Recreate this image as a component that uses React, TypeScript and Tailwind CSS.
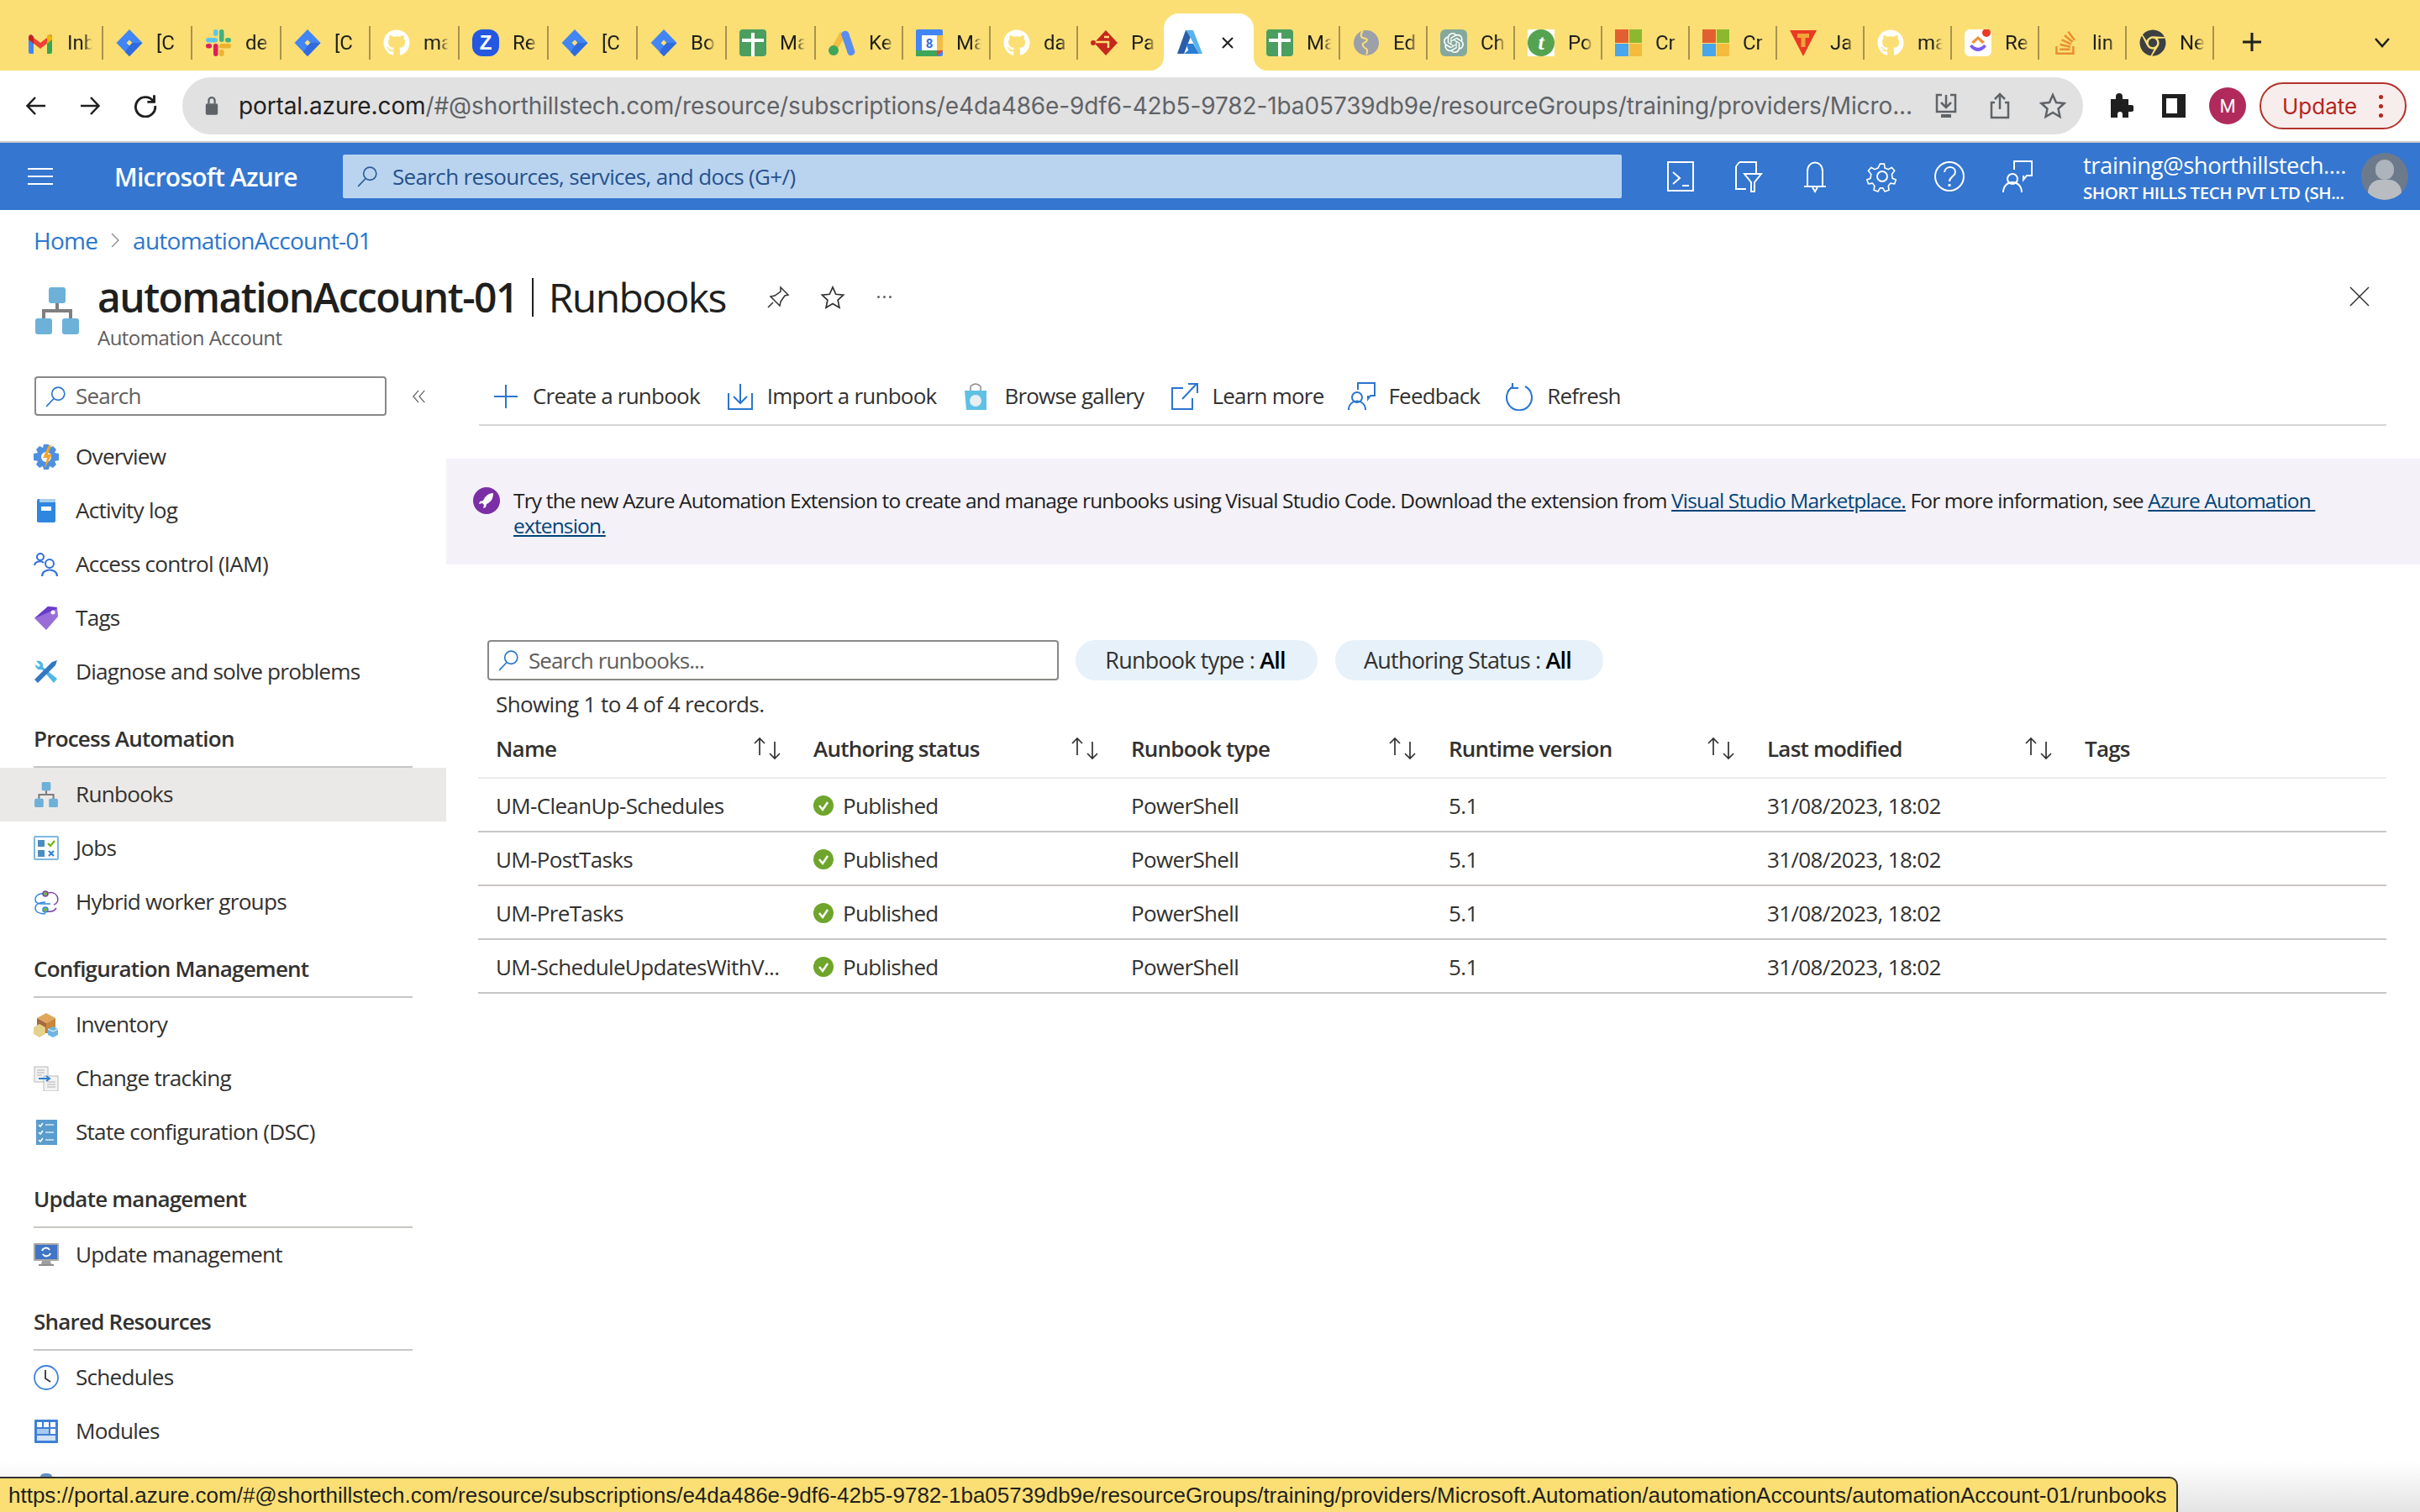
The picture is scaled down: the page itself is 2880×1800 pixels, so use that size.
import React from 'react';
import { FaGithub, FaChrome, FaStackOverflow } from 'react-icons/fa';
import { SiOpenai } from 'react-icons/si';

const SEGOE = "font-['Open_Sans',sans-serif]";

// ---------- Browser tab favicons ----------
const Gmail = () => (
  <svg viewBox="0 0 32 32" className="w-8 h-8">
    <path d="M2 10a3 3 0 0 1 6-1v20H4a2 2 0 0 1-2-2z" fill="#4285f4" />
    <path d="M30 10a3 3 0 0 0-6-1v20h4a2 2 0 0 0 2-2z" fill="#34a853" />
    <path d="M3 6l13 10L29 6l1 6-14 11L2 12z" fill="#ea4335" />
    <path d="M24 9l3-3 3 3v3l-6 5z" fill="#f5b800" />
    <path d="M2 9l3-3 3 3v8l-6-5z" fill="#c5221f" />
  </svg>
);
const Jira = () => (
  <svg viewBox="0 0 32 32" className="w-8 h-8">
    <path fillRule="evenodd" d="M16 0l15.5 16L16 32 .5 16zm0 12.5L12.5 16l3.500 3.500 3.500-3.500z" fill="#4285f4" />
    <path d="M16 19.500l3.500-3.500 12 0L16 32l-5-5z" fill="#2f6bdc" />
  </svg>
);
const Slack = () => (
  <svg viewBox="0 0 32 32" className="w-8 h-8">
    <rect x="1" y="10" width="14" height="5.500" rx="2.750" fill="#5cc6e8" />
    <rect x="10" y="0" width="5.500" height="8" rx="2.750" fill="#5cc6e8" />
    <rect x="17" y="0" width="5.500" height="15" rx="2.750" fill="#3fb27f" />
    <rect x="24" y="10" width="7" height="5.500" rx="2.750" fill="#3fb27f" />
    <rect x="17" y="17" width="14" height="5.500" rx="2.750" fill="#ecb22e" />
    <rect x="17" y="24" width="5.500" height="8" rx="2.750" fill="#ecb22e" />
    <rect x="10" y="17" width="5.500" height="15" rx="2.750" fill="#e01e5a" />
    <rect x="1" y="17" width="7" height="5.500" rx="2.750" fill="#e01e5a" />
  </svg>
);
const GitHub = () => <FaGithub className="w-8 h-8 text-white" />;
const ZoomZ = () => (
  <div className="w-8 h-8 rounded-[12px] bg-[#2558e0] flex items-center justify-center text-white font-bold text-[24px] leading-none font-['Liberation_Sans',sans-serif]">Z</div>
);
const Sheet = () => (
  <div className="w-8 h-8 rounded-[4px] bg-[#4a9e60] relative">
    <div className="absolute left-[14px] top-[4px] w-[4px] h-[28px] bg-white" />
    <div className="absolute left-[3px] top-[11px] w-[26px] h-[4px] bg-white" />
  </div>
);
const Ads = () => (
  <svg viewBox="0 0 32 32" className="w-8 h-8">
    <path d="M14 3L2 24l6 4L20 8z" fill="#f2bd42" />
    <circle cx="6" cy="25" r="6" fill="#3fa55b" />
    <path d="M15 6a5 5 0 0 1 9-2l7 21a4.500 4.500 0 0 1-8 4z" fill="#5a8df0" />
  </svg>
);
const Calendar = () => (
  <svg viewBox="0 0 32 32" className="w-8 h-8">
    <rect width="32" height="32" rx="2" fill="#4285f4" />
    <rect x="7" y="7" width="18" height="18" fill="#fff" />
    <rect x="25" y="7" width="7" height="18" fill="#f2bd42" />
    <rect y="25" width="25" height="7" fill="#3fa55b" />
    <rect y="7" width="7" height="18" fill="#4285f4" />
    <path d="M25 25h7l-7 7z" fill="#ea4335" />
    <text x="16" y="22" textAnchor="middle" fontSize="15" fontWeight="700" fill="#2f6fd4" fontFamily="Roboto, sans-serif">8</text>
  </svg>
);
const RedDiamond = () => (
  <svg viewBox="0 0 32 32" className="w-8 h-8">
    <path d="M18 1l14 15-14 15-12-13v-4z" fill="#c6281c" />
    <circle cx="3" cy="16" r="3" fill="#c6281c" />
    <path d="M6 15h15v7" stroke="#fbdf74" strokeWidth="2.500" fill="none" />
    <path d="M16 9h6" stroke="#fbdf74" strokeWidth="2.500" fill="none" />
  </svg>
);
const AzureA = () => (
  <svg viewBox="0 0 32 32" className="w-8 h-8">
    <path d="M11 2h9L9 30H1z" fill="#2a5ea8" />
    <path d="M20 2h-9l3 4 13 24h4z" fill="#57b3ec" />
    <path d="M12 18l8 0 7 12H9l5-4z" fill="#2b7cd3" />
  </svg>
);
const Globe = () => (
  <svg viewBox="0 0 32 32" className="w-8 h-8">
    <circle cx="16" cy="16" r="15" fill="#9ca0a8" />
    <path d="M12 2c-4 4-3 8 3 9 4 1 1 4-2 5-3 2 0 6 3 7 2 2 1 5 0 7" stroke="#fbdf74" strokeWidth="2" fill="none" />
  </svg>
);
const ChatGpt = () => (
  <div className="w-8 h-8 rounded-[6px] bg-[#84a99c] flex items-center justify-center">
    <SiOpenai className="w-6 h-6 text-white" />
  </div>
);
const GreenT = () => (
  <div className="w-8 h-8 bg-white flex items-center justify-center">
    <div className="w-8 h-8 rounded-full bg-[#55a350] text-white text-[26px] leading-none italic font-bold flex items-center justify-center font-['Liberation_Serif',serif]">t</div>
  </div>
);
const MsLogo = () => (
  <div className="w-8 h-8 grid grid-cols-2 grid-rows-2 gap-[1px]">
    <div className="bg-[#e2602f]" />
    <div className="bg-[#8cb82f]" />
    <div className="bg-[#49a5ec]" />
    <div className="bg-[#f5bb3c]" />
  </div>
);
const RedT = () => (
  <svg viewBox="0 0 32 32" className="w-8 h-8">
    <path d="M0 1h32L16 32z" fill="#ea3a24" />
    <path d="M9 5h14v5h-4.500v11h-5V10H9z" fill="#f2a33a" />
  </svg>
);
const ClickUp = () => (
  <svg viewBox="0 0 32 32" className="w-8 h-8">
    <rect width="32" height="32" rx="6" fill="#fff" />
    <path d="M8 15l8-7 8 7-3 2-5-5-5 5z" fill="#f0913c" />
    <path d="M6 20l3-2c4 5 10 5 14 0l3 2c-6 8-14 8-20 0z" fill="#7a5cf0" />
    <circle cx="26" cy="4" r="5" fill="#ea3a24" />
  </svg>
);
const StackOv = () => <FaStackOverflow className="w-8 h-8 text-[#e8902f]" />;
const ChromeG = () => <FaChrome className="w-8 h-8 text-[#3c4043]" />;

type TabDef = { icon: React.ReactNode; label: string; w: string };
const tabsLeft: TabDef[] = [
  { icon: <Gmail />, label: 'Inb', w: 'w-[106px]' },
  { icon: <Jira />, label: '[C', w: 'w-[106px]' },
  { icon: <Slack />, label: 'de', w: 'w-[106px]' },
  { icon: <Jira />, label: '[C', w: 'w-[106px]' },
  { icon: <GitHub />, label: 'ma', w: 'w-[106px]' },
  { icon: <ZoomZ />, label: 'Re', w: 'w-[106px]' },
  { icon: <Jira />, label: '[C', w: 'w-[106px]' },
  { icon: <Jira />, label: 'Bo', w: 'w-[106px]' },
  { icon: <Sheet />, label: 'Ma', w: 'w-[106px]' },
  { icon: <Ads />, label: 'Ke', w: 'w-[104px]' },
  { icon: <Calendar />, label: 'Ma', w: 'w-[104px]' },
  { icon: <GitHub />, label: 'da', w: 'w-[104px]' },
];
const tabsRight: TabDef[] = [
  { icon: <Sheet />, label: 'Ma', w: 'w-[103px]' },
  { icon: <Globe />, label: 'Ed', w: 'w-[104px]' },
  { icon: <ChatGpt />, label: 'Ch', w: 'w-[104px]' },
  { icon: <GreenT />, label: 'Po', w: 'w-[104px]' },
  { icon: <MsLogo />, label: 'Cr', w: 'w-[104px]' },
  { icon: <MsLogo />, label: 'Cr', w: 'w-[104px]' },
  { icon: <RedT />, label: 'Ja', w: 'w-[104px]' },
  { icon: <GitHub />, label: 'ma', w: 'w-[104px]' },
  { icon: <ClickUp />, label: 'Re', w: 'w-[104px]' },
  { icon: <StackOv />, label: 'lin', w: 'w-[104px]' },
  { icon: <ChromeG />, label: 'Ne', w: 'w-[104px]' },
];

function Tab({ icon, label, w, sep = true }: TabDef & { sep?: boolean }) {
  return (
    <div className={`${w} h-[40px] shrink-0 flex items-center pl-[15px] ${sep ? 'border-r-2 border-[#a8924f]' : ''}`}>
      <div className="w-8 h-8 shrink-0 flex items-center justify-center">{icon}</div>
      <span className="ml-[16px] w-[30px] overflow-hidden whitespace-nowrap text-[24px] text-[#1f1f1f] font-['Roboto',sans-serif] [mask-image:linear-gradient(to_right,black_65%,transparent)]">{label}</span>
    </div>
  );
}

function TabBar() {
  return (
    <div className="h-[84px] bg-[#fbdf74] flex items-start pl-[17px]">
      <div className="flex mt-[31px]">
        {tabsLeft.map((t, i) => <Tab key={i} {...t} />)}
        <Tab icon={<RedDiamond />} label="Pa" w="w-[102px]" sep={false} />
      </div>
      {/* active tab */}
      <div className="relative mt-[16px] w-[107px] h-[68px] bg-white rounded-t-[18px] flex items-center pl-[15px] shrink-0">
        <div className="absolute -left-[16px] bottom-0 w-[16px] h-[16px] bg-white"><div className="w-full h-full bg-[#fbdf74] rounded-br-[16px]" /></div>
        <div className="absolute -right-[16px] bottom-0 w-[16px] h-[16px] bg-white"><div className="w-full h-full bg-[#fbdf74] rounded-bl-[16px]" /></div>
        <AzureA />
        <svg viewBox="0 0 16 16" className="w-4 h-4 ml-[21px] mt-[2px]"><path d="M2 2l12 12M14 2L2 14" stroke="#1f1f1f" strokeWidth="2" /></svg>
      </div>
      <div className="flex mt-[31px]">
        {tabsRight.map((t, i) => <Tab key={i} {...t} />)}
      </div>
      <svg viewBox="0 0 24 24" className="w-6 h-6 ml-[33px] mt-[38px]"><path d="M12 1v22M1 12h22" stroke="#1f1f1f" strokeWidth="3" /></svg>
      <svg viewBox="0 0 24 24" className="w-6 h-6 ml-[131px] mt-[38px]"><path d="M4 8l8 9 8-9" stroke="#1f1f1f" strokeWidth="2.500" fill="none" /></svg>
    </div>
  );
}

// ---------- Browser toolbar ----------
function BrowserToolbar() {
  return (
    <div className="h-[86px] border-b-2 border-[#c9c9c9] bg-white flex items-center relative">
      <div className="w-[217px] flex items-center pl-[31px] gap-[40px] shrink-0">
        <svg viewBox="0 0 24 24" className="w-[24px] h-[24px]"><path d="M23 12H2M11 2L1.500 12 11 22" stroke="#1f1f1f" strokeWidth="2.500" fill="none" /></svg>
        <svg viewBox="0 0 24 24" className="w-[24px] h-[24px]"><path d="M1 12h21M13 2l9.500 10L13 22" stroke="#1f1f1f" strokeWidth="2.500" fill="none" /></svg>
        <svg viewBox="0 0 24 24" className="w-[28px] h-[28px]"><path d="M20 7a10 10 0 1 0 2 5M21 1v7h-7" stroke="#1f1f1f" strokeWidth="2.500" fill="none" /></svg>
      </div>
      <div className="w-[2262px] h-[68px] bg-[#e1e1e1] rounded-full flex items-center pl-[26px] shrink-0">
        <svg viewBox="0 0 20 28" className="w-[18px] h-[26px]"><rect x="2" y="11" width="16" height="15" rx="2" fill="#5f6368" /><path d="M6 11V7a4 4 0 0 1 8 0v4" stroke="#5f6368" strokeWidth="2.500" fill="none" /></svg>
        <span className="ml-[23px] w-[1992px] overflow-hidden whitespace-nowrap text-[28px] text-[#5f6368] font-['Inter',sans-serif] tracking-[-0.004em]">
          <span className="text-[#1f1f1f]">portal.azure.com</span>/#@shorthillstech.com/resource/subscriptions/e4da486e-9df6-42b5-9782-1ba05739db9e/resourceGroups/training/providers/Micro...
        </span>
        <svg viewBox="0 0 28 32" className="w-[28px] h-[32px] ml-[26px]"><path d="M9 3H3v20h22V3h-6M14 3v15M8 12l6 6 6-6" stroke="#5f6368" strokeWidth="2.500" fill="none" /><path d="M8 26h12v4H8z" fill="#5f6368" /></svg>
        <svg viewBox="0 0 28 32" className="w-[28px] h-[32px] ml-[36px]"><path d="M8 12H4v18h20V12h-4M14 20V3M8 8l6-6 6 6" stroke="#5f6368" strokeWidth="2.500" fill="none" /></svg>
        <svg viewBox="0 0 32 32" className="w-[32px] h-[32px] ml-[33px]"><path d="M16 3l4 9 9.500 1-7 6.500L24.500 29 16 24l-8.500 5 2-9.500L2.500 13l9.500-1z" stroke="#5f6368" strokeWidth="2.500" fill="none" /></svg>
      </div>
      <svg viewBox="0 0 32 32" className="w-[32px] h-[36px] ml-[28px] shrink-0"><path d="M11 5a4 4 0 0 1 8 0v3h7v7h3a4 4 0 0 1 0 8h-3v7h-7v-4a3 3 0 0 0-6 0v4H5V8h6z" fill="#1f1f1f" /></svg>
      <div className="w-[28px] h-[28px] ml-[34px] shrink-0 border-[5px] border-l-[5px] border-r-[10px] border-[#1f1f1f] bg-white" />
      <div className="w-[44px] h-[44px] ml-[28px] shrink-0 rounded-full bg-[#b02a5b] text-white text-[22px] flex items-center justify-center font-['Roboto',sans-serif]">M</div>
      <div className="ml-[16px] w-[175px] h-[56px] shrink-0 rounded-full border-2 border-[#b3332b] bg-[#f7eded] flex items-center pl-[25px] text-[#b3261e] text-[26px] font-['Inter',sans-serif]">
        Update
        <span className="ml-[26px] flex flex-col gap-[6px]">
          <span className="w-[5px] h-[5px] rounded-full bg-[#b3261e]" />
          <span className="w-[5px] h-[5px] rounded-full bg-[#b3261e]" />
          <span className="w-[5px] h-[5px] rounded-full bg-[#b3261e]" />
        </span>
      </div>
    </div>
  );
}

// ---------- Azure top bar ----------
const SearchGlass = ({ cls, color = '#2a76cd' }: { cls: string; color?: string }) => (
  <svg viewBox="0 0 24 24" className={cls}>
    <circle cx="15" cy="9" r="7" stroke={color} strokeWidth="1.500" fill="none" />
    <path d="M10 14.500L2 23" stroke={color} strokeWidth="1.500" />
  </svg>
);

function AzureBar() {
  const s = { stroke: '#fff', strokeWidth: 2, fill: 'none' };
  return (
    <div className={`h-[80px] bg-[#3476d0] flex items-center ${SEGOE} text-white`}>
      <div className="w-[136px] pl-[33px] shrink-0">
        <div className="w-[30px] h-[20px] border-y-2 border-white flex items-center"><div className="w-full h-[2px] bg-white" /></div>
      </div>
      <div className="w-[272px] text-[30px] font-semibold tracking-[-0.025em] shrink-0">Microsoft Azure</div>
      <div className="w-[1522px] h-[52px] rounded-[2px] bg-[#bad4f0] flex items-center pl-[16px] shrink-0">
        <SearchGlass cls="w-[26px] h-[26px]" color="#2d5c9c" />
        <span className="ml-[17px] text-[26px] text-[#26518c] tracking-[-0.025em]">Search resources, services, and docs (G+/)</span>
      </div>
      <div className="flex items-center shrink-0 ml-[50px] gap-[40px]">
        <svg viewBox="0 0 40 40" className="w-[40px] h-[40px]" {...s}><rect x="5" y="3" width="30" height="34" /><path d="M11 15l8 7-8 7M22 31h8" /></svg>
        <svg viewBox="0 0 40 40" className="w-[40px] h-[40px]" {...s}><path d="M10 3h20v13M6 8v27h12M10 3L6 8M16 17h20l-8 10v11h-4V27z" /></svg>
        <svg viewBox="0 0 40 40" className="w-[40px] h-[40px]" {...s}><path d="M11 31V14c0-14 18-14 18 0v17M7 32h26M17 33l3 5 3-5" /></svg>
        <svg viewBox="0 0 40 40" className="w-[40px] h-[40px]" {...s}><circle cx="20" cy="20" r="6" /><path d="M17 2h6l1 6 5 2 5-3 4 5-4 5 1 6 5 2-2 6-6-1-3 4 1 6-6 2-3-5h-4l-3 5-6-2 1-6-3-4-6 1-2-6 5-2 1-6-4-5 4-5 5 3 5-2z" transform="translate(3.500 3.500) scale(.82)" /></svg>
        <svg viewBox="0 0 40 40" className="w-[40px] h-[40px]" {...s}><circle cx="20" cy="20" r="17" /><path d="M14 15c1-8 13-8 13 0 0 5-7 5-7 11" /><path d="M20 29v3" strokeWidth="3" /></svg>
        <svg viewBox="0 0 40 40" className="w-[40px] h-[40px]" {...s}><path d="M17 12V2h21v17h-6l-4 5v-5" /><circle cx="15" cy="23" r="6" /><path d="M4 39c0-16 22-16 22 0" /></svg>
      </div>
      <div className="ml-[59px] w-[331px] pt-[2px] shrink-0 tracking-[-0.03em]">
        <div className="text-[27.5px] leading-[36px] whitespace-nowrap">training@shorthillstech....</div>
        <div className="text-[20.500px] leading-[28px] font-semibold whitespace-nowrap">SHORT HILLS TECH PVT LTD (SH...</div>
      </div>
      <div className="w-[56px] h-[56px] rounded-full bg-[#6c7a8c] overflow-hidden relative shrink-0">
        <div className="absolute left-[17px] top-[8px] w-[22px] h-[24px] rounded-full bg-[#aeb4bb]" />
        <div className="absolute left-[8px] top-[32px] w-[40px] h-[30px] rounded-full bg-[#b9bdc2]" />
      </div>
    </div>
  );
}

// ---------- Sidebar icons ----------
const RunbookIcon = ({ cls }: { cls: string }) => (
  <svg viewBox="0 0 52 56" className={cls}>
    <path d="M26 18v10M10 38V28h32v10" stroke="#7f7f7f" strokeWidth="4" fill="none" />
    <rect x="16" y="0" width="20" height="19" rx="3" fill="#6db1d9" />
    <rect x="0" y="37" width="20" height="19" rx="3" fill="#6db1d9" />
    <rect x="32" y="37" width="20" height="19" rx="3" fill="#6db1d9" />
  </svg>
);
const OverviewIcon = () => (
  <svg viewBox="0 0 30 30" className="w-[30px] h-[30px]">
    <path d="M12 0h6l1 4 4-2 4 4-2 4 5 1v8l-5 1 2 4-4 4-4-2-1 4h-6l-1-4-4 2-4-4 2-4-5-1v-8l5-1-2-4 4-4 4 2z" fill="#4f8fdf" />
    <circle cx="15" cy="15" r="6" fill="#fff" />
    <path d="M18 1l-7 15h5l-3 13 9-17h-5l4-11z" fill="#f3a52f" />
  </svg>
);
const ActivityIcon = () => (
  <svg viewBox="0 0 30 30" className="w-[30px] h-[30px]">
    <rect x="4" y="1" width="22" height="28" rx="2" fill="#2f86df" />
    <rect x="7" y="1" width="19" height="4" fill="#a9cdf0" />
    <rect x="9" y="10" width="12" height="5" fill="#fff" />
  </svg>
);
const AccessIcon = () => (
  <svg viewBox="0 0 30 30" className="w-[30px] h-[30px]" stroke="#2f6fd8" strokeWidth="2" fill="none">
    <circle cx="8" cy="6" r="4" />
    <path d="M1 16c1-5 8-6 11-3" />
    <circle cx="19" cy="14" r="5" />
    <path d="M10 29c0-10 18-10 18 0" />
  </svg>
);
const TagsIcon = () => (
  <svg viewBox="0 0 30 30" className="w-[30px] h-[30px]">
    <path d="M17 1l11 1 1 11-14 16L1 15z" fill="#9a6ed8" />
    <path d="M17 1l11 1-1 2L4 14l-3 1z" fill="#6a3ccb" />
    <circle cx="23" cy="8" r="2.500" fill="#fff" />
  </svg>
);
const DiagnoseIcon = () => (
  <svg viewBox="0 0 30 30" className="w-[30px] h-[30px]">
    <path d="M3 2a6 6 0 0 1 8 7l17 14-4 5L10 12A6 6 0 0 1 2 6l4 3 2-2z" fill="#4fb7e6" />
    <path d="M1 24L22 3l6-2-2 6L5 28z" fill="#3278c2" />
  </svg>
);
const JobsIcon = () => (
  <svg viewBox="0 0 30 30" className="w-[30px] h-[30px]">
    <rect x="1" y="1" width="28" height="27" rx="1" fill="#fff" stroke="#7fb7e0" strokeWidth="2" />
    <rect x="5" y="5" width="8" height="8" fill="#4a8cc0" />
    <rect x="5" y="17" width="8" height="8" fill="#4a8cc0" />
    <path d="M17 9l3 3 5-6" stroke="#6bb100" strokeWidth="2" fill="none" />
    <path d="M18 18l6 6M24 18l-6 6" stroke="#2f7fd0" strokeWidth="2" />
  </svg>
);
const HybridIcon = () => (
  <svg viewBox="0 0 30 30" className="w-[30px] h-[30px]" fill="none" strokeWidth="1.500">
    <path d="M14 5c-6-1-12 1-12 7 0 4 3 5 8 5h10" stroke="#2f86df" />
    <path d="M15 5c6-3 11-1 13 3 2 5 0 9-4 10" stroke="#7b3fa8" />
    <path d="M14 15c-6 0-12 2-12 7 0 5 6 7 12 7" stroke="#2f86df" />
    <path d="M16 26c5 1 9-1 11-4" stroke="#7b3fa8" />
    <circle cx="14" cy="5" r="3" fill="#7ab648" stroke="#7b3fa8" />
    <circle cx="14" cy="24" r="3" fill="#7ab648" stroke="#2f86df" />
  </svg>
);
const InventoryIcon = () => (
  <svg viewBox="0 0 30 30" className="w-[30px] h-[30px]">
    <path d="M4 7l11-6 11 6-11 6z" fill="#e0a75c" />
    <path d="M4 7l11 6v12H4z" fill="#a8683a" />
    <path d="M26 7l-11 6v12h11z" fill="#c9873e" />
    <path d="M0 18l7-4 7 4v8l-7 4-7-4z" fill="#e3d28c" />
    <path d="M17 20l6-3 6 3v7l-6 3-6-3z" fill="#6cb5e3" />
    <path d="M17 20l6 3 6-3" stroke="#fff" strokeWidth="1" fill="none" />
  </svg>
);
const ChangeIcon = () => (
  <svg viewBox="0 0 30 30" className="w-[30px] h-[30px]">
    <rect x="1" y="1" width="16" height="18" fill="#f3f3f3" stroke="#b8b8b8" />
    <rect x="12" y="12" width="17" height="18" fill="#f3f3f3" stroke="#b8b8b8" />
    <path d="M4 5h9M4 8h9M4 11h6M16 19h10M16 22h10M16 25h10" stroke="#b0b0b0" />
    <path d="M6 15h12M15 12l4 3-4 3" stroke="#2f7fd0" strokeWidth="2" fill="none" />
  </svg>
);
const StateIcon = () => (
  <svg viewBox="0 0 30 30" className="w-[30px] h-[30px]">
    <rect x="3" y="0" width="25" height="30" fill="#5a9ccc" />
    <path d="M6 6l2 2 3-4M6 15l2 2 3-4M6 24l2 2 3-4" stroke="#fff" strokeWidth="1.500" fill="none" />
    <path d="M14 6h10M14 15h10M14 24h10" stroke="#d6e8f5" strokeWidth="1.500" />
  </svg>
);
const UpdateIcon = () => (
  <svg viewBox="0 0 30 30" className="w-[30px] h-[30px]">
    <rect x="0" y="1" width="30" height="21" rx="1" fill="#a8a8a8" />
    <rect x="2" y="3" width="26" height="17" fill="#3f74c6" />
    <path d="M10 22h10l1 4H9z" fill="#a0a0a0" />
    <rect x="6" y="26" width="18" height="2" fill="#8d8d8d" />
    <path d="M10 10a5 5 0 0 1 9-1M20 13a5 5 0 0 1-9 1" stroke="#fff" strokeWidth="2" fill="none" />
  </svg>
);
const ClockIcon = () => (
  <svg viewBox="0 0 30 30" className="w-[30px] h-[30px]">
    <circle cx="15" cy="15" r="14" fill="#fff" stroke="#3f83dc" strokeWidth="1.800" />
    <path d="M14 6v10l6 4" stroke="#333" strokeWidth="1.800" fill="none" />
  </svg>
);
const ModulesIcon = () => (
  <svg viewBox="0 0 30 30" className="w-[30px] h-[30px]">
    <rect x="1" y="1" width="28" height="28" rx="1" fill="#3e80d6" />
    <rect x="4" y="4" width="6" height="6" fill="#fff" />
    <rect x="12" y="4" width="6" height="6" fill="#fff" />
    <rect x="20" y="4" width="6" height="6" fill="#fff" />
    <rect x="4" y="12" width="14" height="6" fill="#a8cbee" />
    <rect x="20" y="12" width="6" height="6" fill="#fff" />
    <rect x="4" y="20" width="22" height="6" fill="#cfe2f6" />
  </svg>
);
const PythonIcon = () => (
  <svg viewBox="0 0 30 30" className="w-[30px] h-[30px]">
    <path d="M8 14V5q0-4 7-4t7 4v9z" fill="#2f6fb6" />
  </svg>
);

function NavItem({ icon, label, active = false }: { icon: React.ReactNode; label: string; active?: boolean }) {
  return (
    <div className={`h-[64px] shrink-0 flex items-center pl-[40px] gap-[20px] text-[26.200px] text-[#323130] tracking-[-0.03em] ${active ? 'bg-[#ebe9e7]' : ''}`}>
      <div className="w-[30px] h-[30px] flex items-center justify-center shrink-0">{icon}</div>
      <span className="whitespace-nowrap">{label}</span>
    </div>
  );
}

function NavHeader({ label }: { label: string }) {
  return (
    <div className="shrink-0">
      <div className="h-[80px] pt-[14px] pl-[40px] flex items-center text-[26px] font-semibold text-[#323130] tracking-[-0.03em]">{label}</div>
      <div className="ml-[40px] w-[451px] h-[2px] bg-[#c8c6c4]" />
    </div>
  );
}

function Sidebar() {
  return (
    <aside className="w-[531px] shrink-0 flex flex-col">
      <div className="flex items-center pl-[41px]">
        <div className="w-[419px] h-[47px] border-2 border-[#8a8886] rounded-[4px] flex items-center pl-[10px]">
          <SearchGlass cls="w-[26px] h-[26px]" />
          <span className="ml-[11px] text-[26px] text-[#605e5c] tracking-[-0.03em]">Search</span>
        </div>
        <svg viewBox="0 0 20 20" className="w-[18px] h-[18px] ml-[30px]"><path d="M9 2L2 10l7 8M17 2l-7 8 7 8" stroke="#605e5c" strokeWidth="1.300" fill="none" /></svg>
      </div>
      <div className="h-[17px] shrink-0" />
      <NavItem icon={<OverviewIcon />} label="Overview" />
      <NavItem icon={<ActivityIcon />} label="Activity log" />
      <NavItem icon={<AccessIcon />} label="Access control (IAM)" />
      <NavItem icon={<TagsIcon />} label="Tags" />
      <NavItem icon={<DiagnoseIcon />} label="Diagnose and solve problems" />
      <NavHeader label="Process Automation" />
      <NavItem icon={<RunbookIcon cls="w-[28px] h-[30px]" />} label="Runbooks" active />
      <NavItem icon={<JobsIcon />} label="Jobs" />
      <NavItem icon={<HybridIcon />} label="Hybrid worker groups" />
      <NavHeader label="Configuration Management" />
      <NavItem icon={<InventoryIcon />} label="Inventory" />
      <NavItem icon={<ChangeIcon />} label="Change tracking" />
      <NavItem icon={<StateIcon />} label="State configuration (DSC)" />
      <NavHeader label="Update management" />
      <NavItem icon={<UpdateIcon />} label="Update management" />
      <NavHeader label="Shared Resources" />
      <NavItem icon={<ClockIcon />} label="Schedules" />
      <NavItem icon={<ModulesIcon />} label="Modules" />
      <NavItem icon={<PythonIcon />} label="Python packages" />
    </aside>
  );
}

// ---------- Main content ----------
function ToolbarBtn({ icon, label, gap = 'gap-[16px]' }: { icon: React.ReactNode; label: string; gap?: string }) {
  return (
    <div className={`flex items-center ${gap}`}>
      {icon}
      <span className="text-[26px] text-[#323130] tracking-[-0.03em] whitespace-nowrap -mt-[1px]">{label}</span>
    </div>
  );
}

const SortIcon = () => (
  <svg viewBox="0 0 36 28" className="w-[36px] h-[28px] shrink-0" stroke="#323130" strokeWidth="1.700" fill="none">
    <path d="M9 22V2M3 8l6-6 6 6" />
    <path d="M27 6v20M21 20l6 6 6-6" />
  </svg>
);

const CheckIcon = () => (
  <svg viewBox="0 0 24 24" className="w-[24px] h-[24px] shrink-0">
    <circle cx="12" cy="12" r="12" fill="#6fa52b" />
    <path d="M7 12l4 5 6-9" stroke="#fff" strokeWidth="2.500" fill="none" />
  </svg>
);

const rows = ['UM-CleanUp-Schedules', 'UM-PostTasks', 'UM-PreTasks', 'UM-ScheduleUpdatesWithV...'];
const cols = 'grid grid-cols-[378px_378px_378px_379px_378px_1fr] pl-[21px]';

function HeaderCell({ label, sort = true }: { label: string; sort?: boolean }) {
  return (
    <div className="flex items-center justify-between pr-[37px] font-semibold tracking-[-0.03em]">
      <span>{label}</span>
      {sort && <SortIcon />}
    </div>
  );
}

function Main() {
  return (
    <main className="flex-1 min-w-0 flex flex-col">
      <div className="ml-[39px] mr-[40px] h-[59px] border-b-2 border-[#d6d6d6] flex items-start pl-[18px]">
        <div className="h-[48px] flex items-center">
          <ToolbarBtn gap="gap-[18px]" label="Create a runbook" icon={
            <svg viewBox="0 0 28 28" className="w-[28px] h-[28px]"><path d="M14 0v28M0 14h28" stroke="#2a76cd" strokeWidth="2" /></svg>
          } />
          <div className="w-[32px]" />
          <ToolbarBtn label="Import a runbook" icon={
            <svg viewBox="0 0 32 32" className="w-[32px] h-[32px]" stroke="#2a76cd" strokeWidth="2" fill="none"><path d="M2 12v19h28V12M16 1v23M8 16l8 8 8-8" /></svg>
          } />
          <div className="w-[33px]" />
          <ToolbarBtn gap="gap-[20px]" label="Browse gallery" icon={
            <svg viewBox="0 0 28 32" className="w-[28px] h-[32px]"><path d="M8 10V4q6-6 12 0v6" stroke="#8a8a8a" strokeWidth="1.500" fill="none" /><path d="M1 9h26v23H3z" fill="#5fc0e4" /><circle cx="14" cy="21" r="7" fill="#e8eef2" /></svg>
          } />
          <div className="w-[32px]" />
          <ToolbarBtn gap="gap-[15px]" label="Learn more" icon={
            <svg viewBox="0 0 34 34" className="w-[34px] h-[34px]" stroke="#2a76cd" strokeWidth="2" fill="none"><path d="M15 7H2v25h24V19M14 20L31 2M21 2h11v11" /></svg>
          } />
          <div className="w-[28px]" />
          <ToolbarBtn gap="gap-[15px]" label="Feedback" icon={
            <svg viewBox="0 0 34 34" className="w-[34px] h-[34px]" stroke="#2a76cd" strokeWidth="2" fill="none"><path d="M13 9V1h20v15h-5l-3 4v-4" /><circle cx="12" cy="18" r="6" /><path d="M2 33c0-14 20-14 20 0" /></svg>
          } />
          <div className="w-[30px]" />
          <ToolbarBtn label="Refresh" icon={
            <svg viewBox="0 0 34 34" className="w-[34px] h-[34px]" stroke="#2a76cd" strokeWidth="2" fill="none"><path d="M10 5a15 15 0 1 0 14 0M9 1v6h7" /></svg>
          } />
        </div>
      </div>

      {/* extension notice */}
      <div className="mt-[39px] h-[126px] bg-[#f5f1f9] flex items-start pl-[32px] pr-[60px] pt-[35px]">
        <svg viewBox="0 0 32 32" className="w-[32px] h-[32px] shrink-0 -mt-[1px]">
          <circle cx="16" cy="16" r="16" fill="#7b2fa4" />
          <path d="M24 7c-6 0-10 4-12 9l-4 1-1 3 4-1 2 2-1 4 3-1 1-4c5-2 8-6 8-13z" fill="#fff" />
        </svg>
        <p className="ml-[16px] text-[24.500px] leading-[30px] text-[#201f1e] tracking-[-0.0345em]">
          Try the new Azure Automation Extension to create and manage runbooks using Visual Studio Code. Download the extension from{' '}
          <span className="text-[#004578] underline">Visual Studio Marketplace.</span> For more information, see{' '}
          <span className="text-[#004578] underline">Azure Automation&nbsp;<wbr />extension.</span>
        </p>
      </div>

      {/* filters */}
      <div className="mt-[90px] ml-[49px] flex items-center">
        <div className="w-[680px] h-[48px] border-2 border-[#8a8886] rounded-[4px] flex items-center pl-[10px]">
          <SearchGlass cls="w-[26px] h-[26px]" />
          <span className="ml-[11px] text-[26px] text-[#605e5c] tracking-[-0.035em]">Search runbooks...</span>
        </div>
        <div className="ml-[20px] w-[288px] h-[48px] pr-[3px] rounded-full bg-[#e6f1fa] flex items-center justify-center text-[27px] text-[#323130] tracking-[-0.03em]">
          Runbook type :&nbsp;<b className="font-semibold text-black">All</b>
        </div>
        <div className="ml-[21px] w-[319px] h-[48px] pr-[4px] rounded-full bg-[#e6f1fa] flex items-center justify-center text-[27px] text-[#323130] tracking-[-0.03em]">
          Authoring Status :&nbsp;<b className="font-semibold text-black">All</b>
        </div>
      </div>
      <div className="ml-[59px] h-[47px] pt-[9px] flex items-center text-[26px] text-[#323130] tracking-[-0.023em]">Showing 1 to 4 of 4 records.</div>

      {/* table */}
      <div className="ml-[38px] mr-[40px] text-[26px] text-[#323130] tracking-[-0.025em]">
        <div className={`${cols} h-[70px] border-b-2 border-[#edebe9]`}>
          <HeaderCell label="Name" />
          <HeaderCell label="Authoring status" />
          <HeaderCell label="Runbook type" />
          <HeaderCell label="Runtime version" />
          <HeaderCell label="Last modified" />
          <HeaderCell label="Tags" sort={false} />
        </div>
        {rows.map(r => (
          <div key={r} className={`${cols} h-[64px] pt-[2px] border-b-2 border-[#c8c6c4] items-center`}>
            <span className="whitespace-nowrap">{r}</span>
            <span className="flex items-center gap-[11px]"><CheckIcon />Published</span>
            <span>PowerShell</span>
            <span>5.1</span>
            <span>31/08/2023, 18:02</span>
            <span />
          </div>
        ))}
      </div>
    </main>
  );
}

export default function App() {
  return (
    <div className={`relative w-[2880px] h-[1800px] overflow-hidden bg-white ${SEGOE}`}>
      <TabBar />
      <BrowserToolbar />
      <AzureBar />

      {/* Breadcrumb */}
      <div className="h-[72px] pl-[40px] flex items-center text-[28px] text-[#2a76cd] tracking-[-0.027em]">
        <span>Home</span>
        <svg viewBox="0 0 12 20" className="w-[12px] h-[20px] mx-[15px]"><path d="M2 2l8 8-8 8" stroke="#8a8886" strokeWidth="1.300" fill="none" /></svg>
        <span>automationAccount-01</span>
      </div>

      {/* Resource title */}
      <div className="h-[126px] pl-[42px] flex items-start relative">
        <RunbookIcon cls="w-[52px] h-[56px] mt-[20px] shrink-0" />
        <div className="ml-[22px]">
          <div className="h-[63px] flex items-center text-[48px] text-[#201f1e] tracking-[-0.033em] whitespace-nowrap">
            <span className="font-semibold">automationAccount-01</span>
            <span className="ml-[17px] mr-[18px] w-[2px] h-[46px] bg-[#201f1e]" />
            <span>Runbooks</span>
          </div>
          <div className="text-[24px] text-[#605e5c] tracking-[-0.022em] -mt-[1px]">Automation Account</div>
        </div>
        <div className="flex items-center h-[63px] ml-[48px] gap-[36px]">
          <svg viewBox="0 0 28 28" className="w-[28px] h-[28px]" stroke="#323130" strokeWidth="1.500" fill="none"><path d="M17 2l9 9-4 1-5 7-1 5-11-11 5-1 7-5zM8 20l-6 6" /></svg>
          <svg viewBox="0 0 32 32" className="w-[30px] h-[30px]" stroke="#323130" strokeWidth="1.800" fill="none"><path d="M16 3l4 9 9.500 1-7 6.500L24.500 29 16 24l-8.500 5 2-9.500L2.500 13l9.500-1z" /></svg>
          <span className="flex gap-[4px] items-center ml-[2px]">
            <span className="w-[3px] h-[3px] rounded-full bg-[#605e5c]" />
            <span className="w-[3px] h-[3px] rounded-full bg-[#605e5c]" />
            <span className="w-[3px] h-[3px] rounded-full bg-[#605e5c]" />
          </span>
        </div>
        <svg viewBox="0 0 24 24" className="absolute right-[60px] top-[19px] w-[24px] h-[24px]"><path d="M1 1l22 22M23 1L1 23" stroke="#323130" strokeWidth="1.500" /></svg>
      </div>

      {/* Blade */}
      <div className="flex h-[1352px]">
        <Sidebar />
        <Main />
      </div>

      {/* Link status bubble */}
      <div className="absolute inset-x-0 bottom-0 h-[60px] bg-gradient-to-b from-transparent to-[#e4e4e4]" />
      <div className="absolute left-0 bottom-0 w-[2592px] h-[42px] bg-[#fbdf74] border-t-2 border-r-2 border-[#333] rounded-tr-[10px] flex items-center pl-[10px] text-[26px] text-[#1f1f1f] whitespace-nowrap overflow-hidden font-['Liberation_Sans',sans-serif]">
        https://portal.azure.com/#@shorthillstech.com/resource/subscriptions/e4da486e-9df6-42b5-9782-1ba05739db9e/resourceGroups/training/providers/Microsoft.Automation/automationAccounts/automationAccount-01/runbooks
      </div>
    </div>
  );
}
